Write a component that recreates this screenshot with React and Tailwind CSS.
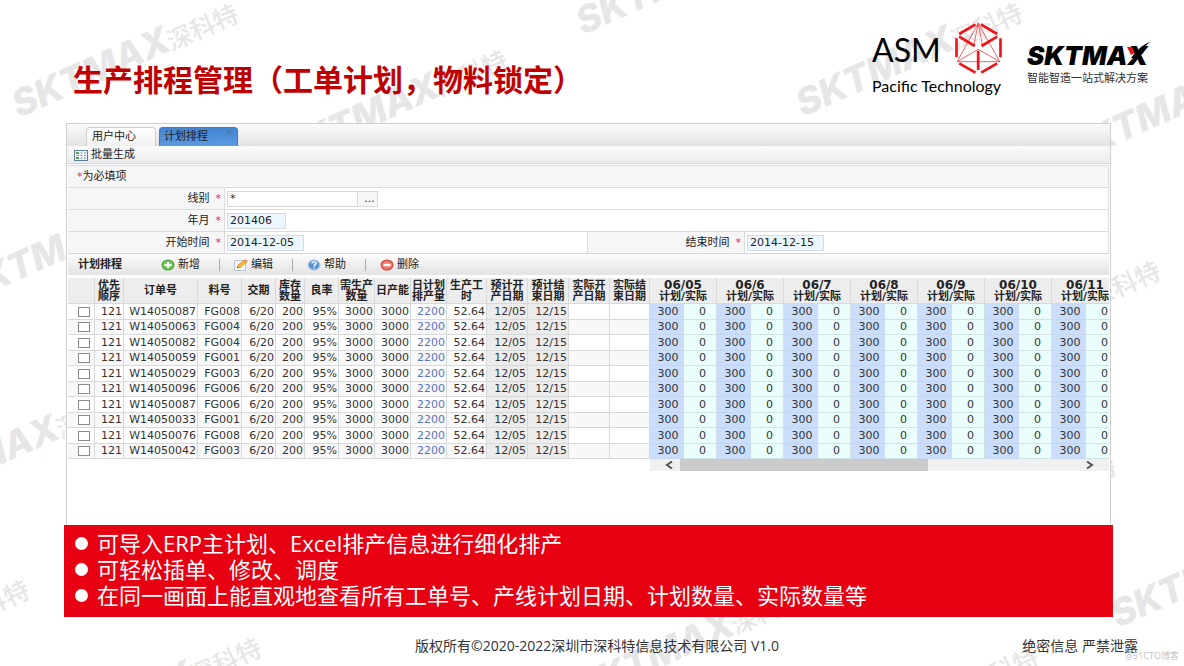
import { useState } from 'react'

const orders = [
  ['W14050087', 'FG008'],
  ['W14050063', 'FG004'],
  ['W14050082', 'FG004'],
  ['W14050059', 'FG001'],
  ['W14050029', 'FG003'],
  ['W14050096', 'FG006'],
  ['W14050087', 'FG006'],
  ['W14050033', 'FG001'],
  ['W14050076', 'FG008'],
  ['W14050042', 'FG003'],
]

const days = ['06/05', '06/6', '06/7', '06/8', '06/9', '06/10', '06/11']

const columns = [
  { lines: ['优先', '顺序'], width: 'w-[29px]' },
  { lines: ['订单号'], width: 'w-[74px]' },
  { lines: ['料号'], width: 'w-[44px]' },
  { lines: ['交期'], width: 'w-[34px]' },
  { lines: ['库存', '数量'], width: 'w-[29px]' },
  { lines: ['良率'], width: 'w-[34px]' },
  { lines: ['需生产', '数量'], width: 'w-[36px]' },
  { lines: ['日产能'], width: 'w-[36px]' },
  { lines: ['日计划', '排产量'], width: 'w-[36px]' },
  { lines: ['生产工', '时'], width: 'w-[40px]' },
  { lines: ['预计开', '产日期'], width: 'w-[41px]' },
  { lines: ['预计结', '束日期'], width: 'w-[41px]' },
  { lines: ['实际开', '产日期'], width: 'w-[41px]' },
  { lines: ['实际结', '束日期'], width: 'w-[40px]' },
]

// start of each background mark's baseline
const marks = [
  [19, 118],
  [288, 164],
  [583, 35],
  [803, 117],
  [1072, 164],
  [-33, 303],
  [941, 375],
  [-92, 506],
  [897, 570],
  [-190, 694],
  [42, 752],
  [583, 702],
  [819, 761],
  [1118, 628],
]

function Watermarks() {
  return (
    <svg className="absolute inset-0 h-full w-full" fill="#e6e6e6" aria-hidden="true">
      {marks.map(([x, y]) => (
        <g key={`${x}-${y}`} transform={`translate(${x} ${y}) rotate(-24)`}>
          <text className="font-['Inter',sans-serif] text-[37px] font-extrabold italic">SKTMAX</text>
          <text x="167" y="1" className="font-['Noto_Sans_CJK_SC',sans-serif] text-[25px] font-medium">
            深科特
          </text>
        </g>
      ))}
    </svg>
  )
}

function AsmLogo() {
  return (
    <div className="w-[130px] text-black">
      <div className="flex h-[52px] items-center justify-between">
        <span className="pt-1 font-['Lato',sans-serif] text-[32px] leading-none">ASM</span>
        <svg viewBox="284 6 140 156" className="h-[52px] w-[47px]" fill="none" stroke="#f01418">
          <path
            strokeWidth="8"
            d="M296 42L345 13M361 13L410 42M420 55V112M288 55V112M296 130L345 158M362 158L410 130M296 50L343 78M363 78L410 50M353 92V150"
          />
          <path strokeWidth="2" d="M353 10L290 125H418ZM353 10L340 76M353 10L366 76M290 125L353 88L418 125" />
        </svg>
      </div>
      <p className="font-['Lato',sans-serif] text-[16px] leading-6 whitespace-nowrap">Pacific Technology</p>
    </div>
  )
}

function SktmaxLogo() {
  return (
    <div className="relative w-[123px]">
      <p className="font-['Inter',sans-serif] text-[26px] leading-7 font-black text-black italic">SKTMAX</p>
      <svg viewBox="0 0 32 26" className="absolute top-0 right-0 h-[26px] w-8">
        <path d="M9 5H14L16.500 11L13 13Z" fill="#e8141c" />
        <path d="M13 16C18 9 24 3 32 0C26 5 21 10 17 16Z" fill="#000" />
      </svg>
      <p className="text-[11px] leading-4 whitespace-nowrap text-[#333]">智能智造一站式解决方案</p>
    </div>
  )
}

function ListIcon() {
  return (
    <svg viewBox="0 0 14 11" className="h-[11px] w-[14px]">
      <rect x=".5" y=".5" width="13" height="10" fill="#f4f8fb" stroke="#5b7d9b" />
      <path d="M2 3H5M2 8H5" stroke="#5d9c4a" strokeWidth="2" />
      <path d="M2 5.5H5" stroke="#d8973a" />
      <path d="M6.500 3H8.500M10 3H12M6.500 5.500H8.500M10 5.500H12M6.500 8H8.500M10 8H12" stroke="#6c8bb0" />
    </svg>
  )
}

function AddIcon() {
  return (
    <svg viewBox="0 0 14 12" className="h-3 w-[14px]">
      <ellipse cx="7" cy="6" rx="6.500" ry="5.500" fill="#4ea83c" />
      <ellipse cx="7" cy="6" rx="5" ry="4" fill="#7cc867" />
      <path d="M3.500 6H10.500M7 3V9" stroke="#fff" strokeWidth="2" />
    </svg>
  )
}

function EditIcon() {
  return (
    <svg viewBox="0 0 14 12" className="h-3 w-[14px]">
      <path d="M.5 1.500H11.500V11.500H.5Z" fill="#fafafa" stroke="#b9c3cc" />
      <path d="M3 9L4 6L10 1L13 3L6.500 8.500Z" fill="#f2b53c" stroke="#c98a2b" strokeWidth=".6" />
      <path d="M10 1L11.500 .2L13.800 2L13 3Z" fill="#e98a6a" />
      <path d="M3 9L3.400 7.600L4.800 8.500Z" fill="#444" />
    </svg>
  )
}

function HelpIcon() {
  return (
    <svg viewBox="0 0 14 12" className="h-3 w-[14px]">
      <ellipse cx="7" cy="6" rx="6.500" ry="5.500" fill="#a9c9ea" />
      <ellipse cx="7" cy="6" rx="5.200" ry="4.400" fill="#5c92d2" />
      <path d="M5 4.500C5 2.300 9 2.300 9 4.500C9 5.800 7 5.600 7 7.200M7 8.200V9.500" fill="none" stroke="#fff" strokeWidth="1.400" />
    </svg>
  )
}

function DeleteIcon() {
  return (
    <svg viewBox="0 0 14 12" className="h-3 w-[14px]">
      <ellipse cx="7" cy="6" rx="6.500" ry="5.500" fill="#d9473d" />
      <ellipse cx="7" cy="6" rx="5.200" ry="4.300" fill="#ee7a6e" />
      <path d="M3.500 6H10.500" stroke="#fff" strokeWidth="2.400" />
    </svg>
  )
}

const actions = [
  { label: '新增', Icon: AddIcon },
  { label: '编辑', Icon: EditIcon },
  { label: '帮助', Icon: HelpIcon },
  { label: '删除', Icon: DeleteIcon },
]

function FieldLabel({ htmlFor, children }) {
  return (
    <label
      htmlFor={htmlFor}
      className="flex w-[157px] shrink-0 items-center justify-end gap-[6px] border-r border-[#dcdcdc] bg-[#f6f6f6] pt-[2px] pr-[3px]"
    >
      {children}
      <span className="text-[#e0304e]">*</span>
    </label>
  )
}

function PlanForm() {
  const [line, setLine] = useState('*')
  const [month, setMonth] = useState('201406')
  const [start, setStart] = useState('2014-12-05')
  const [end, setEnd] = useState('2014-12-15')

  const filled = 'h-4 border border-[#d3dde6] bg-[#eef6fd] pt-[2px] pl-[2px]'

  return (
    <form className="mx-px border-t border-r border-[#dcdcdc] bg-white">
      <p className="h-[22px] border-b border-[#dcdcdc] bg-[#f6f6f6] pl-[9px] leading-[21px]">
        <span className="text-[#e0304e]">*</span>为必填项
      </p>
      <div className="flex h-[22px] border-b border-[#dcdcdc]">
        <FieldLabel htmlFor="line">线别</FieldLabel>
        <div className="flex items-center pl-[2px]">
          <input
            id="line"
            value={line}
            onChange={(e) => setLine(e.target.value)}
            className="h-4 w-[131px] border border-[#d8d8d8] bg-white pt-[2px] pl-[2px]"
          />
          <button type="button" aria-label="选择线别" className="h-4 w-5 border border-l-0 border-[#d8d8d8] bg-[#f7f7f7] pl-1 leading-3">
            ...
          </button>
        </div>
      </div>
      <div className="flex h-[22px] border-b border-[#dcdcdc]">
        <FieldLabel htmlFor="month">年月</FieldLabel>
        <div className="flex items-center pl-[2px]">
          <input id="month" value={month} onChange={(e) => setMonth(e.target.value)} className={`${filled} w-[59px]`} />
        </div>
      </div>
      <div className="grid h-[21px] grid-cols-2">
        <div className="flex border-r border-[#dcdcdc]">
          <FieldLabel htmlFor="start">开始时间</FieldLabel>
          <div className="flex items-center pl-[2px]">
            <input id="start" value={start} onChange={(e) => setStart(e.target.value)} className={`${filled} w-[77px]`} />
          </div>
        </div>
        <div className="flex">
          <FieldLabel htmlFor="end">结束时间</FieldLabel>
          <div className="flex items-center pl-[2px]">
            <input id="end" value={end} onChange={(e) => setEnd(e.target.value)} className={`${filled} w-[77px]`} />
          </div>
        </div>
      </div>
    </form>
  )
}

function PlanTable() {
  const cell = 'border-r border-b border-[#d6dada] p-0 pr-px'

  return (
    <div className="mx-px mt-[3px] overflow-hidden">
      <table className="w-[1051px] table-fixed border-separate border-spacing-0 text-right text-[#333]">
        <thead className="bg-[#ededed] text-center leading-[11px] text-[#222]">
          <tr className="h-[26px]">
            <th className="w-[27px] border-r border-b border-[#d6dada] p-0"></th>
            {columns.map(({ lines, width }) => (
              <th key={lines.join('')} className={`${width} border-r border-b border-[#d6dada] p-0 whitespace-nowrap`}>
                {lines.map((text) => (
                  <span key={text} className="block">{text}</span>
                ))}
              </th>
            ))}
            {days.map((day) => (
              <th key={day} colSpan={2} className="w-[67px] border-r border-b border-[#d6dada] p-0 whitespace-nowrap">
                <span className="block text-[12px] leading-[11px]">{day}</span>
                <span className="block">计划/实际</span>
              </th>
            ))}
          </tr>
        </thead>
        <tbody className="leading-[14px]">
          {orders.map(([order, part], i) => (
            <tr key={i} className="odd:h-4 odd:bg-white even:h-[15px] even:bg-[#f8f8f8]">
              <td className={cell}>
                <input
                  type="checkbox"
                  aria-label={order}
                  className="mr-[3px] block h-[10px] w-3 appearance-none justify-self-end border border-[#8a8a8a] bg-white checked:bg-[#4a86cf]"
                />
              </td>
              <td className={cell}>121</td>
              <td className={cell}>{order}</td>
              <td className={cell}>{part}</td>
              <td className={cell}>6/20</td>
              <td className={cell}>200</td>
              <td className={cell}>95%</td>
              <td className={cell}>3000</td>
              <td className={cell}>3000</td>
              <td className={`${cell} text-[#5573c4]`}>2200</td>
              <td className={cell}>52.64</td>
              <td className={`${cell} bg-[#ececec]`}>12/05</td>
              <td className={`${cell} bg-[#ececec]`}>12/15</td>
              <td className={cell}></td>
              <td className={cell}></td>
              {days.map((day) => [
                <td key={`${day}-plan`} className="border-b border-[#c6d6ec] bg-[#cadefb] p-0 pr-[5px]">300</td>,
                <td key={`${day}-real`} className="border-r border-b border-[#d3e2e2] bg-[#eafffd] p-0 pr-[10px]">0</td>,
              ])}
            </tr>
          ))}
        </tbody>
      </table>
      <div className="ml-[582px] flex h-3 items-center bg-[#f0f0f0]">
        <button type="button" aria-label="向左滚动" className="w-[30px] pl-[15px]">
          <svg viewBox="0 0 8 8" className="h-2 w-2" fill="none" stroke="#555" strokeWidth="2">
            <path d="M7 .5L2 4L7 7.500" />
          </svg>
        </button>
        <div className="flex h-full flex-1">
          <div className="h-full w-[63%] bg-[#cbcbcb]"></div>
        </div>
        <button type="button" aria-label="向右滚动" className="w-[35px] pl-3">
          <svg viewBox="0 0 8 8" className="h-2 w-2" fill="none" stroke="#555" strokeWidth="2">
            <path d="M1 .5L6 4L1 7.500" />
          </svg>
        </button>
      </div>
    </div>
  )
}

export default function App() {
  return (
    <div className="relative min-h-screen overflow-hidden bg-white font-['Open_Sans','Noto_Sans_CJK_SC',sans-serif]">
      <Watermarks />

      <div className="relative">
        <header className="flex h-[123px] items-start justify-between pr-[34px] pl-[73px]">
          <h1 className="pt-[57px] font-['Noto_Sans_CJK_SC',sans-serif] text-[30px] leading-[42px] font-bold text-[#c00000]">
            生产排程管理（工单计划，物料锁定）
          </h1>
          <div className="flex gap-[25px]">
            <div className="pt-[22px]">
              <AsmLogo />
            </div>
            <div className="pt-[42px]">
              <SktmaxLogo />
            </div>
          </div>
        </header>

        <main className="mr-[71px] ml-16">
          <section className="mr-[2px] ml-[2px] border border-b-0 border-[#cfcfcf] bg-white pb-[54px] font-['DejaVu_Sans','Noto_Sans_CJK_SC',sans-serif] text-[11px] text-[#222]">
            <nav className="flex h-[22px] items-end gap-[3px] bg-linear-to-b from-[#fbfbfb] to-[#e2e2e2] pl-[19px]">
              <button className="h-[19px] w-[70px] rounded-t-sm border border-b-0 border-[#cfcfcf] bg-linear-to-b from-white to-[#f1f1f1] pr-[14px]">
                用户中心
              </button>
              <button className="relative h-[19px] w-[79px] rounded-t-sm border border-b-0 border-[#3f7cc0] bg-linear-to-b from-[#4384d0] to-[#5b9ae0] pl-1 text-left">
                计划排程
                <span className="absolute top-0 right-1 text-[9px] leading-[9px] text-[#55708f]">×</span>
              </button>
            </nav>
            <div className="flex h-[18px] items-center border-b border-[#d6d6d6] bg-linear-to-b from-[#fbfbf8] to-[#e9ebef] pt-[2px] pl-[7px]">
              <button className="flex items-center gap-[3px]">
                <ListIcon />
                批量生成
              </button>
            </div>
            <div className="h-px"></div>
            <PlanForm />
            <div className="mx-px flex h-[22px] items-center border-t border-[#d6d6d6] bg-linear-to-b from-[#fbfbfb] to-[#e3e3e3] pt-px pl-[10px]">
              <h2 className="w-[83px] font-bold">计划排程</h2>
              {actions.map(({ label, Icon }, i) => (
                <div key={label} className="flex items-center">
                  {i > 0 && <span className="mr-[14px] h-3 w-px bg-[#aaa]"></span>}
                  <button className="flex w-[58px] items-center gap-[3px]">
                    <Icon />
                    {label}
                  </button>
                </div>
              ))}
            </div>
            <PlanTable />
          </section>

          <ul className="bg-[#e60012] pt-[5px] pb-[9px] text-[22px] leading-[26px] text-white">
            {[
              '可导入ERP主计划、Excel排产信息进行细化排产',
              '可轻松插单、修改、调度',
              '在同一画面上能直观地查看所有工单号、产线计划日期、计划数量、实际数量等',
            ].map((text) => (
              <li key={text} className="flex items-center gap-[9px] pl-[11px]">
                <span className="h-[13px] w-[13px] shrink-0 rounded-full bg-white"></span>
                {text}
              </li>
            ))}
          </ul>
        </main>

        <footer className="grid grid-cols-[1fr_auto_1fr] pt-[18px] pl-[10px] text-[14px] leading-[22px] text-[#333]">
          <p className="col-start-2">版权所有©2020-2022深圳市深科特信息技术有限公司 V1.0</p>
          <p className="pr-[46px] text-right">绝密信息 严禁泄露</p>
        </footer>
      </div>

      <span className="absolute right-[5px] bottom-1 text-[9px] leading-3 text-[#c4c4c4]">@51CTO博客</span>
    </div>
  )
}
